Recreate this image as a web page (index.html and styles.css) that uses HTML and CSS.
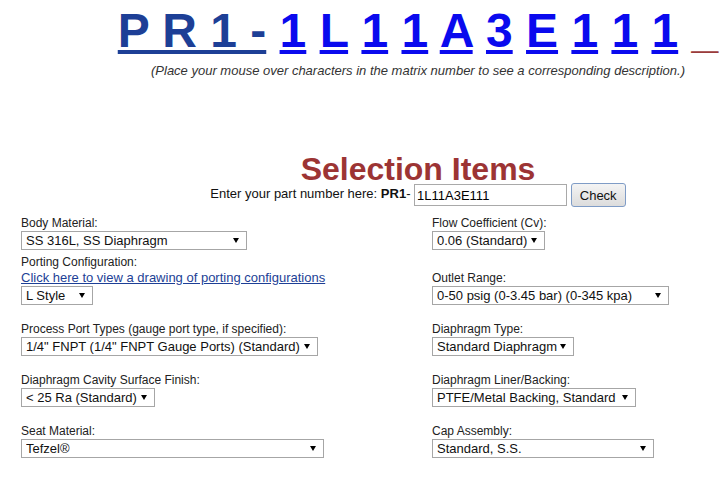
FILE: index.html
```html
<!DOCTYPE html>
<html lang="en">
<head>
    <meta charset="UTF-8">
    <title>PR1 Selection Items</title>
    <link rel="stylesheet" href="styles.css">
</head>
<body>

<div class="page">
    <div class="top">
        <div class="matrix">
            <span class="prefix">P R 1 -</span>
            <a href="#">1</a>
            <a href="#">L</a>
            <a href="#">1</a>
            <a href="#">1</a>
            <a href="#">A</a>
            <a href="#">3</a>
            <a href="#">E</a>
            <a href="#">1</a>
            <a href="#">1</a>
            <a href="#">1</a>
            <span class="tail">_</span>
        </div>
        <p class="hint">(Place your mouse over characters in the matrix number to see a corresponding description.)</p>

        <h2 class="title">Selection Items</h2>
        <form class="partno" onsubmit="return false">
            Enter your part number here: <b>PR1</b>- <input type="text" value="1L11A3E111"> <button>Check</button>
        </form>
    </div>

    <div class="fields">
        <div class="field row-a">
            <label>Body Material:</label>
            <select class="sel-body"><option>SS 316L, SS Diaphragm</option></select>
        </div>
        <div class="field row-a">
            <label>Flow Coefficient (Cv):</label>
            <select class="sel-flow"><option>0.06 (Standard)</option></select>
        </div>

        <div class="field">
            <label>Porting Configuration:</label>
            <a class="drawing" href="#">Click here to view a drawing of porting configurations</a>
            <select class="sel-style"><option>L Style</option></select>
        </div>
        <div class="field bottom">
            <label>Outlet Range:</label>
            <select class="sel-outlet"><option>0-50 psig (0-3.45 bar) (0-345 kpa)</option></select>
        </div>

        <div class="field">
            <label>Process Port Types (gauge port type, if specified):</label>
            <select class="sel-port"><option>1/4" FNPT (1/4" FNPT Gauge Ports) (Standard)</option></select>
        </div>
        <div class="field">
            <label>Diaphragm Type:</label>
            <select class="sel-diaph"><option>Standard Diaphragm</option></select>
        </div>

        <div class="field">
            <label>Diaphragm Cavity Surface Finish:</label>
            <select class="sel-cavity"><option>&lt; 25 Ra (Standard)</option></select>
        </div>
        <div class="field">
            <label>Diaphragm Liner/Backing:</label>
            <select class="sel-liner"><option>PTFE/Metal Backing, Standard</option></select>
        </div>

        <div class="field">
            <label>Seat Material:</label>
            <select class="sel-seat"><option>Tefzel&reg;</option></select>
        </div>
        <div class="field">
            <label>Cap Assembly:</label>
            <select class="sel-cap"><option>Standard, S.S.</option></select>
        </div>
    </div>
</div>

</body>
</html>
```

FILE: styles.css
```css
body {
    margin: 0;
    background: #fff;
    color: #222;
    font-family: "Liberation Sans", Arial, sans-serif;
}
.page {
    margin-left: 21px;
    padding-top: 6px;
}
/* the original page is wider than the window, so the centre sits right of the middle */
.top {
    padding-left: 87px;
    text-align: center;
}
.matrix {
    font-size: 48px;
    font-weight: bold;
    line-height: 50px;
    white-space: nowrap;
}
.matrix .prefix {
    color: #1d3f96;
    text-decoration: underline;
}
.matrix a {
    color: #0a0aee;
}
.matrix .tail {
    color: #9a3b3b;
}
.hint {
    margin: 7px 0 0;
    font-size: 13px;
    font-style: italic;
    color: #333;
}
.title {
    margin: 79px 0 0;
    color: #9c3434;
    font-size: 32px;
    line-height: 24px;
}
.partno {
    padding-top: 2px;
    font-size: 13px;
    color: #111;
}
.partno input {
    width: 147px;
    height: 18px;
    padding: 1px 2px;
    border: 1px solid #a9a9a9;
    font-family: inherit;
    font-size: 13px;
    vertical-align: middle;
}
.partno button {
    width: 55px;
    height: 24px;
    border: 1px solid #7f9cc6;
    border-radius: 3px;
    background: linear-gradient(#f4f4f4, #dcdcdc);
    font-family: inherit;
    font-size: 13px;
    color: #111;
    vertical-align: middle;
}
.fields {
    display: grid;
    grid-template-columns: 411px 1fr;
    margin-top: 9px;
}
.field {
    display: flex;
    flex-direction: column;
    align-items: flex-start;
    margin-bottom: 17px;
    font-size: 12px;
    line-height: 15px;
}
.field.row-a {
    margin-bottom: 5px;
}
.field.bottom {
    justify-content: flex-end;
}
.field label {
    color: #222;
}
.drawing {
    color: #1d3f96;
    font-size: 13px;
    margin-bottom: 1px;
}
select {
    appearance: none;
    -webkit-appearance: none;
    height: 19px;
    padding: 0 0 0 4px;
    border: 1px solid #a6a6a6;
    border-radius: 0;
    background: #fff url("data:image/svg+xml,%3Csvg xmlns='http://www.w3.org/2000/svg' width='6' height='5'%3E%3Cpath d='M0 0h6L3 5z' fill='%23000'/%3E%3C/svg%3E") no-repeat right 7px center;
    font-family: inherit;
    font-size: 13px;
    color: #111;
}
.sel-body { width: 226px; }
.sel-flow { width: 113px; }
.sel-style { width: 72px; }
.sel-outlet { width: 237px; }
.sel-port { width: 297px; }
.sel-diaph { width: 142px; }
.sel-cavity { width: 134px; }
.sel-liner { width: 204px; }
.sel-seat { width: 303px; }
.sel-cap { width: 222px; }
```
